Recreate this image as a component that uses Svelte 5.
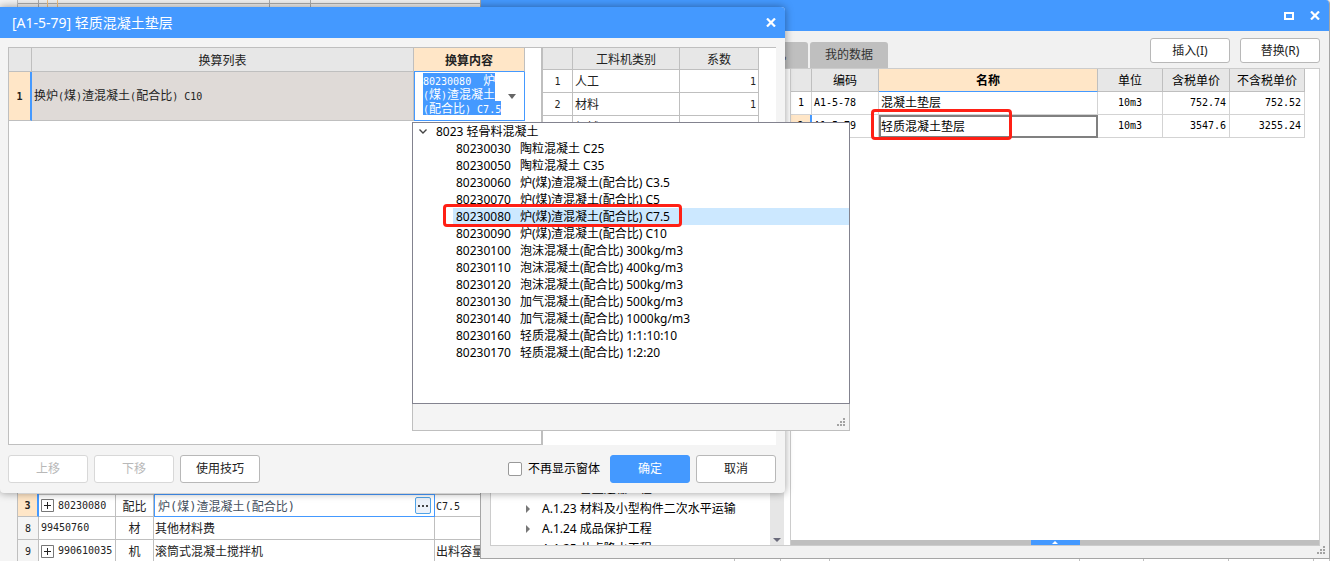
<script lang="ts">
  type BackRow = { no: string; code: string; kind: string; name: string; spec: string; expand?: boolean; active?: boolean };

  const backRows: BackRow[] = [
    { no: "3", code: "80230080", kind: "配比", name: "炉(煤)渣混凝土(配合比)", spec: "C7.5", expand: true, active: true },
    { no: "8", code: "99450760", kind: "材", name: "其他材料费", spec: "" },
    { no: "9", code: "990610035", kind: "机", name: "滚筒式混凝土搅拌机", spec: "出料容量", expand: true },
  ];

  const chapters = ["A.1.22 垂直运输工程", "A.1.23 材料及小型构件二次水平运输", "A.1.24 成品保护工程", "A.1.25 井点降水工程"];

  const quotas = [
    { code: "A1-5-78", name: "混凝土垫层", unit: "10m3", taxed: "752.74", untaxed: "752.52" },
    { code: "A1-5-79", name: "轻质混凝土垫层", unit: "10m3", taxed: "3547.6", untaxed: "3255.24" },
  ];

  const factors = [
    { name: "人工", value: "1" },
    { name: "材料", value: "1" },
    { name: "机械", value: "1" },
  ];

  const materials = [
    { code: "80230030", name: "陶粒混凝土 C25" },
    { code: "80230050", name: "陶粒混凝土 C35" },
    { code: "80230060", name: "炉(煤)渣混凝土(配合比) C3.5" },
    { code: "80230070", name: "炉(煤)渣混凝土(配合比) C5" },
    { code: "80230080", name: "炉(煤)渣混凝土(配合比) C7.5" },
    { code: "80230090", name: "炉(煤)渣混凝土(配合比) C10" },
    { code: "80230100", name: "泡沫混凝土(配合比) 300kg/m3" },
    { code: "80230110", name: "泡沫混凝土(配合比) 400kg/m3" },
    { code: "80230120", name: "泡沫混凝土(配合比) 500kg/m3" },
    { code: "80230130", name: "加气混凝土(配合比) 500kg/m3" },
    { code: "80230140", name: "加气混凝土(配合比) 1000kg/m3" },
    { code: "80230160", name: "轻质混凝土(配合比) 1:1:10:10" },
    { code: "80230170", name: "轻质混凝土(配合比) 1:2:20" },
  ];

  let selectedQuota = $state("A1-5-79");
  let selectedMaterial = $state("80230080");
  let hideNextTime = $state(false);

  // latin runs are set in a half-width mono face
  const runs = (text: string) => text.match(/[\x20-\x7e]+|[^\x20-\x7e]+/g) ?? [];
  const isLatin = (run: string) => /^[\x20-\x7e]/.test(run);
</script>

{#snippet cell(text: string)}
  {#each runs(text) as run}<span class:latin={isLatin(run)}>{run}</span>{/each}
{/snippet}

{#snippet closeIcon()}
  <svg width="10" height="9" viewBox="0 0 10 9"><path d="M1 0.5 9 8.5M9 0.5 1 8.5" stroke="#fff" stroke-width="2.2" /></svg>
{/snippet}

{#snippet grip()}
  <svg class="grip" width="8" height="8" viewBox="0 0 8 8" fill="#a3a3a3">
    <path d="M6 0h2v2H6zM3 3h2v2H3zM6 3h2v2H6zM0 6h2v2H0zM3 6h2v2H3zM6 6h2v2H6z" />
  </svg>
{/snippet}

<main class="desktop">
  <section class="sheet">
    <div class="sheet-top">
      <i class="c1"></i><i class="c2"></i><i class="c3"></i><i class="c4"></i><i class="c5"></i>
    </div>
    <table class="back">
      <colgroup>
        <col class="w-no" /><col class="w-code" /><col class="w-kind" /><col class="w-name" /><col class="w-spec" />
        <col class="w-a" /><col class="w-b" /><col class="w-c" /><col class="w-d" /><col class="w-e" /><col class="w-f" /><col />
      </colgroup>
      <tbody>
        {#each backRows as row}
          <tr class:active={row.active}>
            <th>{@render cell(row.no)}</th>
            <td>
              <div class="code">
                {#if row.expand}
                  <button class="expand" aria-label="展开">
                    <svg width="13" height="13" viewBox="0 0 13 13" fill="none" stroke="#777"><path d="M.5.5h12v12H.5z" /><path d="M3 6.5h7M6.5 3v7" stroke="#222" /></svg>
                  </button>
                {/if}
                {@render cell(row.code)}
              </div>
            </td>
            <td class="center">{@render cell(row.kind)}</td>
            <td class="name">
              {#if row.active}
                <div class="edit">
                  <input aria-label="名称" value={row.name} />
                  <button class="more" aria-label="选择">
                    <svg width="10" height="2" viewBox="0 0 10 2" fill="#444"><path d="M0 0h2v2H0zM4 0h2v2H4zM8 0h2v2H8z" /></svg>
                  </button>
                </div>
              {:else}
                {@render cell(row.name)}
              {/if}
            </td>
            <td>{@render cell(row.spec)}</td>
            <td></td><td></td><td></td><td></td><td></td><td></td><td></td>
          </tr>
        {/each}
      </tbody>
    </table>
  </section>

  <section class="library">
    <header class="titlebar">
      <button class="win" aria-label="最大化">
        <svg width="10" height="8" viewBox="0 0 10 8"><path d="M1 1h8v6H1z" fill="none" stroke="#fff" stroke-width="2" /></svg>
      </button>
      <button class="win" aria-label="关闭">{@render closeIcon()}</button>
    </header>
    <div class="toolbar">
      <nav class="tabs">
        <button>人材机</button>
        <button>我的数据</button>
      </nav>
      <button class="btn">插入(I)</button>
      <button class="btn">替换(R)</button>
    </div>
    <div class="panes">
      <div class="tree">
        <ul>
          {#each chapters as chapter}
            <li>
              <svg width="4" height="8" viewBox="0 0 4 8"><path d="M0 0 4 4 0 8z" fill="#777" /></svg>
              {chapter}
            </li>
          {/each}
        </ul>
        <div class="scroll">
          <svg width="8" height="4" viewBox="0 0 8 4"><path d="M0 0h8L4 4z" fill="#6b6b7b" /></svg>
        </div>
      </div>
      <div class="detail">
        <table class="quota">
          <colgroup><col class="q-no" /><col class="q-code" /><col /><col class="q-unit" /><col class="q-price" /><col class="q-notax" /></colgroup>
          <thead>
            <tr><th></th><th>编码</th><th class="current">名称</th><th>单位</th><th>含税单价</th><th>不含税单价</th></tr>
          </thead>
          <tbody>
            {#each quotas as quota, i}
              <tr class:selected={quota.code === selectedQuota} onclick={() => (selectedQuota = quota.code)}>
                <th>{@render cell(String(i + 1))}</th>
                <td>{@render cell(quota.code)}</td>
                <td class="title">
                  {quota.name}
                  {#if quota.code === selectedQuota}<span class="mark"></span>{/if}
                </td>
                <td class="center">{@render cell(quota.unit)}</td>
                <td class="right">{@render cell(quota.taxed)}</td>
                <td class="right">{@render cell(quota.untaxed)}</td>
              </tr>
            {/each}
          </tbody>
        </table>
        <button class="splitter" aria-label="展开下方面板">
          <span><svg width="6" height="3" viewBox="0 0 6 3"><path d="M3 0 6 3H0z" fill="#fff" /></svg></span>
        </button>
      </div>
    </div>
    {@render grip()}
  </section>

  <section class="dialog">
    <header class="titlebar">
      <h1>[A1-5-79] 轻质混凝土垫层</h1>
      <button class="win" aria-label="关闭">{@render closeIcon()}</button>
    </header>
    <div class="lists">
      <div class="convert">
        <table>
          <colgroup><col class="v-no" /><col /><col class="v-content" /></colgroup>
          <thead>
            <tr><th></th><th>换算列表</th><th class="current">换算内容</th></tr>
          </thead>
          <tbody>
            <tr>
              <th>{@render cell("1")}</th>
              <td>{@render cell("换炉(煤)渣混凝土(配合比) C10")}</td>
              <td class="editor">
                <button class="combo" aria-haspopup="listbox" aria-expanded="true">
                  <span class="lines">
                    <span class="hl">{@render cell("80230080  炉")}</span>
                    <span class="hl">{@render cell("(煤)渣混凝土")}</span>
                    <span class="hl">{@render cell("(配合比) C7.5")}</span>
                  </span>
                  <svg width="8" height="5" viewBox="0 0 8 5"><path d="M0 0h8L4 5z" fill="#666" /></svg>
                </button>
              </td>
            </tr>
          </tbody>
        </table>
      </div>
      <div class="factor">
        <table>
          <colgroup><col class="f-no" /><col /><col class="f-value" /></colgroup>
          <thead>
            <tr><th></th><th>工料机类别</th><th>系数</th></tr>
          </thead>
          <tbody>
            {#each factors as factor, i}
              <tr>
                <td class="center">{@render cell(String(i + 1))}</td>
                <td>{factor.name}</td>
                <td class="right">{@render cell(factor.value)}</td>
              </tr>
            {/each}
          </tbody>
        </table>
      </div>
    </div>
    <footer>
      <button class="btn" disabled>上移</button>
      <button class="btn" disabled>下移</button>
      <button class="btn">使用技巧</button>
      <label><input type="checkbox" bind:checked={hideNextTime} />不再显示窗体</label>
      <button class="btn primary">确定</button>
      <button class="btn">取消</button>
    </footer>
  </section>

  <section class="popup">
    <div class="options">
      <div class="group">
        <svg width="8" height="5" viewBox="0 0 8 5"><path d="M.5.5 4 4 7.5.5" fill="none" stroke="#444" stroke-width="1.4" /></svg>
        8023 轻骨料混凝土
      </div>
      <ul role="listbox" aria-label="换算内容">
        {#each materials as m}
          <li role="option" aria-selected={m.code === selectedMaterial}>
            <button class="option" class:selected={m.code === selectedMaterial} onclick={() => (selectedMaterial = m.code)}>
              <span>{m.code}</span><span>{m.name}</span>
            </button>
            {#if m.code === selectedMaterial}<span class="mark"></span>{/if}
          </li>
        {/each}
      </ul>
    </div>
    <div class="status">{@render grip()}</div>
  </section>
</main>

<style>
  :global(body) {
    margin: 0;
  }

  .desktop {
    --blue: #4499ff;
    --line: #bfbfbf;
    --head: #e7e7e7;
    --peach: #ffe6c7;
    --red: #ff2015;
    position: relative;
    height: 100vh;
    overflow: hidden;
    background: #f4f4f4;
    color: #222;
    font: 12px/16px "Noto Sans", "Noto Sans CJK SC", sans-serif;
  }

  .desktop :global(*) {
    box-sizing: border-box;
  }

  svg {
    display: block;
    flex: none;
  }

  button,
  input {
    font: inherit;
    color: inherit;
    margin: 0;
    padding: 0;
  }

  button {
    border: 0;
    background: none;
  }

  ul {
    list-style: none;
    margin: 0;
    padding: 0;
  }

  table {
    width: 100%;
    table-layout: fixed;
    border-collapse: separate;
    border-spacing: 0;
    font-family: "Noto Sans CJK SC", sans-serif;
  }

  th,
  td {
    height: 23px;
    padding: 0 2px;
    border-right: 1px solid var(--line);
    border-bottom: 1px solid var(--line);
    text-align: left;
    white-space: nowrap;
  }

  th {
    font-weight: normal;
    text-align: center;
    background: var(--head);
  }

  th.current {
    font-weight: bold;
    background: var(--peach);
    border-bottom-color: var(--blue);
  }

  .center {
    text-align: center;
  }

  .right {
    text-align: right;
  }

  .latin {
    font-family: "DejaVu Sans Mono", monospace;
    font-size: 10px;
    white-space: pre;
  }

  .mark {
    position: absolute;
    border: 3px solid var(--red);
    border-radius: 4px;
    pointer-events: none;
  }

  /* sheet behind the windows */
  .sheet {
    position: absolute;
    inset: 0 0 -2px 17px;
    display: flex;
    flex-direction: column;
    justify-content: space-between;
    background: #fff;
    border-left: 1px solid var(--line);
  }

  .sheet-top {
    display: flex;
    height: 12px;
    background: #efefef linear-gradient(#aaa, #aaa) 0 3px / 100% 1px no-repeat;
  }

  .sheet-top i {
    border-right: 1px solid #aaa;
  }

  .c1 {
    width: 21px;
  }

  .sheet-top .c2 {
    width: 9px;
    border-color: #f0c080;
  }

  .sheet-top .c3 {
    width: 10px;
    border-color: #f0c080;
  }

  .c4 {
    width: 212px;
  }

  .c5 {
    width: 41px;
  }

  .w-no {
    width: 21px;
  }

  .w-code {
    width: 77px;
  }

  .w-kind {
    width: 38px;
  }

  .w-name {
    width: 281px;
  }

  .w-spec {
    width: 300px;
  }

  .w-a {
    width: 46px;
  }

  .w-b {
    width: 49px;
  }

  .w-c {
    width: 250px;
  }

  .w-d {
    width: 64px;
  }

  .w-e,
  .w-f {
    width: 85px;
  }

  .back th {
    padding: 0;
    background: #f4f4f4;
  }

  .back td {
    padding: 0 1px;
  }

  .back .active th {
    font-weight: bold;
    background: var(--peach);
    border-right: 2px solid var(--blue);
  }

  .back .active td {
    border-top: 1px solid var(--line);
  }

  .back .active td.name {
    padding: 0;
    border: 1px solid var(--blue);
  }

  .code {
    display: flex;
    align-items: center;
    padding-left: 1px;
  }

  .expand {
    margin-right: 4px;
  }

  .edit {
    display: flex;
    align-items: center;
    padding: 0 3px;
  }

  .edit input {
    flex: 1;
    min-width: 0;
    height: 18px;
    border: 0;
    outline: 0;
    background: none;
    color: #44505e;
    font-family: "DejaVu Sans Mono", "Noto Sans CJK SC", monospace;
  }

  .more {
    display: grid;
    place-items: center;
    width: 16px;
    height: 17px;
    border: 1px solid #4fa3e8;
    border-radius: 2px;
    background: #edf2fa;
  }

  /* shared window parts */
  .titlebar {
    display: flex;
    align-items: center;
    justify-content: flex-end;
    flex: none;
    height: 31px;
    gap: 16px;
    padding: 0 9px 0 12px;
    background: var(--blue);
    color: #fff;
  }

  .titlebar h1 {
    flex: 1;
    margin: 0;
    font-size: 14px;
    font-weight: normal;
  }

  .btn {
    width: 80px;
    height: 28px;
    border: 1px solid #b8b8b8;
    border-radius: 3px;
    background: #fff;
  }

  .btn:disabled {
    color: #b8b8b8;
    border-color: #d8d8d8;
  }

  .btn.primary {
    color: #fff;
    border-color: var(--blue);
    background: var(--blue);
  }

  .grip {
    position: absolute;
    right: 4px;
    bottom: 4px;
  }

  /* library window */
  .library {
    position: absolute;
    inset: 0 0 2px 480px;
    display: flex;
    flex-direction: column;
    border: 1px solid #a5a5a5;
    border-top: 0;
    border-radius: 0 4px 0 0;
    background: #f1f1f1;
    overflow: hidden;
  }

  .library .titlebar {
    margin: 0 -1px;
    padding-right: 10px;
  }

  .toolbar {
    display: flex;
    align-items: center;
    flex: none;
    height: 37px;
    gap: 10px;
    padding: 0 9px;
  }

  .toolbar .btn {
    height: 25px;
    margin-top: 2px;
  }

  .tabs {
    display: flex;
    flex: 1;
    align-self: flex-end;
    gap: 2px;
    padding-left: 242px;
  }

  .tabs button {
    width: 78px;
    height: 26px;
    border-radius: 3px 3px 0 0;
    background: var(--line);
    color: #333;
  }

  .tabs button:first-child {
    width: 76px;
    padding-right: 4px;
  }

  .panes {
    display: flex;
    flex: 1;
    min-height: 0;
    padding: 0 9px 12px;
  }

  .tree {
    display: flex;
    align-items: stretch;
    width: 300px;
    padding-right: 6px;
    border: 1px solid #ccc;
    border-right: 0;
    background: #fff;
    overflow: hidden;
  }

  .tree ul {
    flex: 1;
    align-self: flex-end;
    margin-bottom: -14px;
    padding-left: 35px;
  }

  .tree li {
    display: flex;
    align-items: center;
    gap: 12px;
    height: 20px;
    color: #000;
    white-space: nowrap;
  }

  .scroll {
    display: flex;
    align-items: flex-end;
    justify-content: center;
    width: 14px;
    padding-bottom: 3px;
    background: #e6e6e6;
  }

  .detail {
    display: flex;
    flex-direction: column;
    justify-content: space-between;
    flex: 1;
    border: 1px solid #ccc;
    background: #fff;
  }

  .quota {
    width: auto;
    margin-right: 14px;
    color: #000;
  }

  .q-no {
    width: 21px;
  }

  .q-code {
    width: 67px;
  }

  .q-unit {
    width: 65px;
  }

  .q-price {
    width: 67px;
  }

  .q-notax {
    width: 75px;
  }

  .quota tbody th,
  .quota td {
    padding-bottom: 2px;
    border-color: #d3d3d3;
  }

  .quota tbody th {
    background: #fff;
  }

  .quota .selected th {
    background: var(--peach);
    border-right: 2px solid var(--blue);
  }

  .quota .title {
    position: relative;
  }

  .quota .selected .title {
    border: 2px solid #808080;
    padding-left: 0;
  }

  .title .mark {
    top: -8px;
    left: -10px;
    width: 141px;
    height: 31px;
  }

  .quota td.right {
    padding-right: 3px;
  }

  .splitter {
    display: flex;
    justify-content: center;
    height: 5px;
    background: var(--line);
  }

  .splitter span {
    display: grid;
    place-items: center;
    width: 49px;
    height: 5px;
    background: var(--blue);
  }

  /* conversion dialog */
  .dialog {
    position: absolute;
    top: 7px;
    left: 0;
    width: 785px;
    border-radius: 0 4px 4px 4px;
    background: #f4f4f4;
    box-shadow: 0 0 9px rgba(0, 0, 0, 0.4);
  }

  .dialog .titlebar {
    border-radius: 0 4px 0 0;
  }

  .lists {
    display: flex;
    min-height: 398px;
    margin: 9px 9px 10px 8px;
  }

  .convert {
    width: 535px;
    padding-right: 16px;
    border: 1px solid var(--line);
    border-right-width: 2px;
    background: #fff;
  }

  .v-no {
    width: 23px;
  }

  .v-content {
    width: 111px;
  }

  .convert thead th {
    height: 24px;
  }

  .convert tbody th {
    font-weight: bold;
    background: var(--peach);
    border-right: 2px solid var(--blue);
  }

  .convert tbody td {
    height: 49px;
    background: #dfdad7;
  }

  .convert tbody td.editor {
    padding: 0;
    border: 1px solid var(--blue);
    border-top: 0;
    background: #fff;
  }

  .combo {
    display: flex;
    align-items: center;
    justify-content: space-between;
    width: 100%;
    padding: 0 8px;
    text-align: left;
  }

  .lines {
    display: flex;
    flex-direction: column;
    align-items: flex-start;
    padding-bottom: 4px;
  }

  .hl {
    height: 14px;
    line-height: 14px;
    background: var(--blue);
    color: #fff;
  }

  .factor {
    flex: 1;
    padding-right: 17px;
    border-top: 1px solid var(--line);
    background: #fff;
  }

  .factor thead th {
    height: 22px;
  }

  .f-no {
    width: 30px;
  }

  .f-value {
    width: 79px;
  }

  footer {
    display: flex;
    align-items: center;
    gap: 6px;
    padding: 0 9px 10px 8px;
  }

  label {
    display: flex;
    align-items: center;
    gap: 6px;
    margin-left: auto;
    margin-right: 4px;
    color: #000;
  }

  label input {
    appearance: none;
    width: 14px;
    height: 14px;
    border: 1px solid #999;
    border-radius: 2px;
    background: #fff;
  }

  label input:checked {
    background: var(--blue);
  }

  /* drop-down list */
  .popup {
    position: absolute;
    top: 122px;
    left: 412px;
    width: 438px;
    color: #000;
  }

  .options {
    min-height: 282px;
    border: 1px solid #83838f;
    background: #fff;
  }

  .group {
    display: flex;
    align-items: center;
    gap: 9px;
    height: 17px;
    padding-left: 6px;
  }

  .popup li {
    position: relative;
    padding-left: 40px;
  }

  .option {
    display: flex;
    align-items: center;
    gap: 9px;
    width: 100%;
    height: 17px;
    padding-left: 3px;
    white-space: nowrap;
  }

  .option.selected {
    background: #cce8ff;
  }

  .popup .mark {
    top: -4px;
    left: 30px;
    width: 239px;
    height: 23px;
  }

  .status {
    position: relative;
    height: 27px;
    border: 1px solid var(--line);
    border-top: 0;
    background: #f4f4f4;
  }
</style>
